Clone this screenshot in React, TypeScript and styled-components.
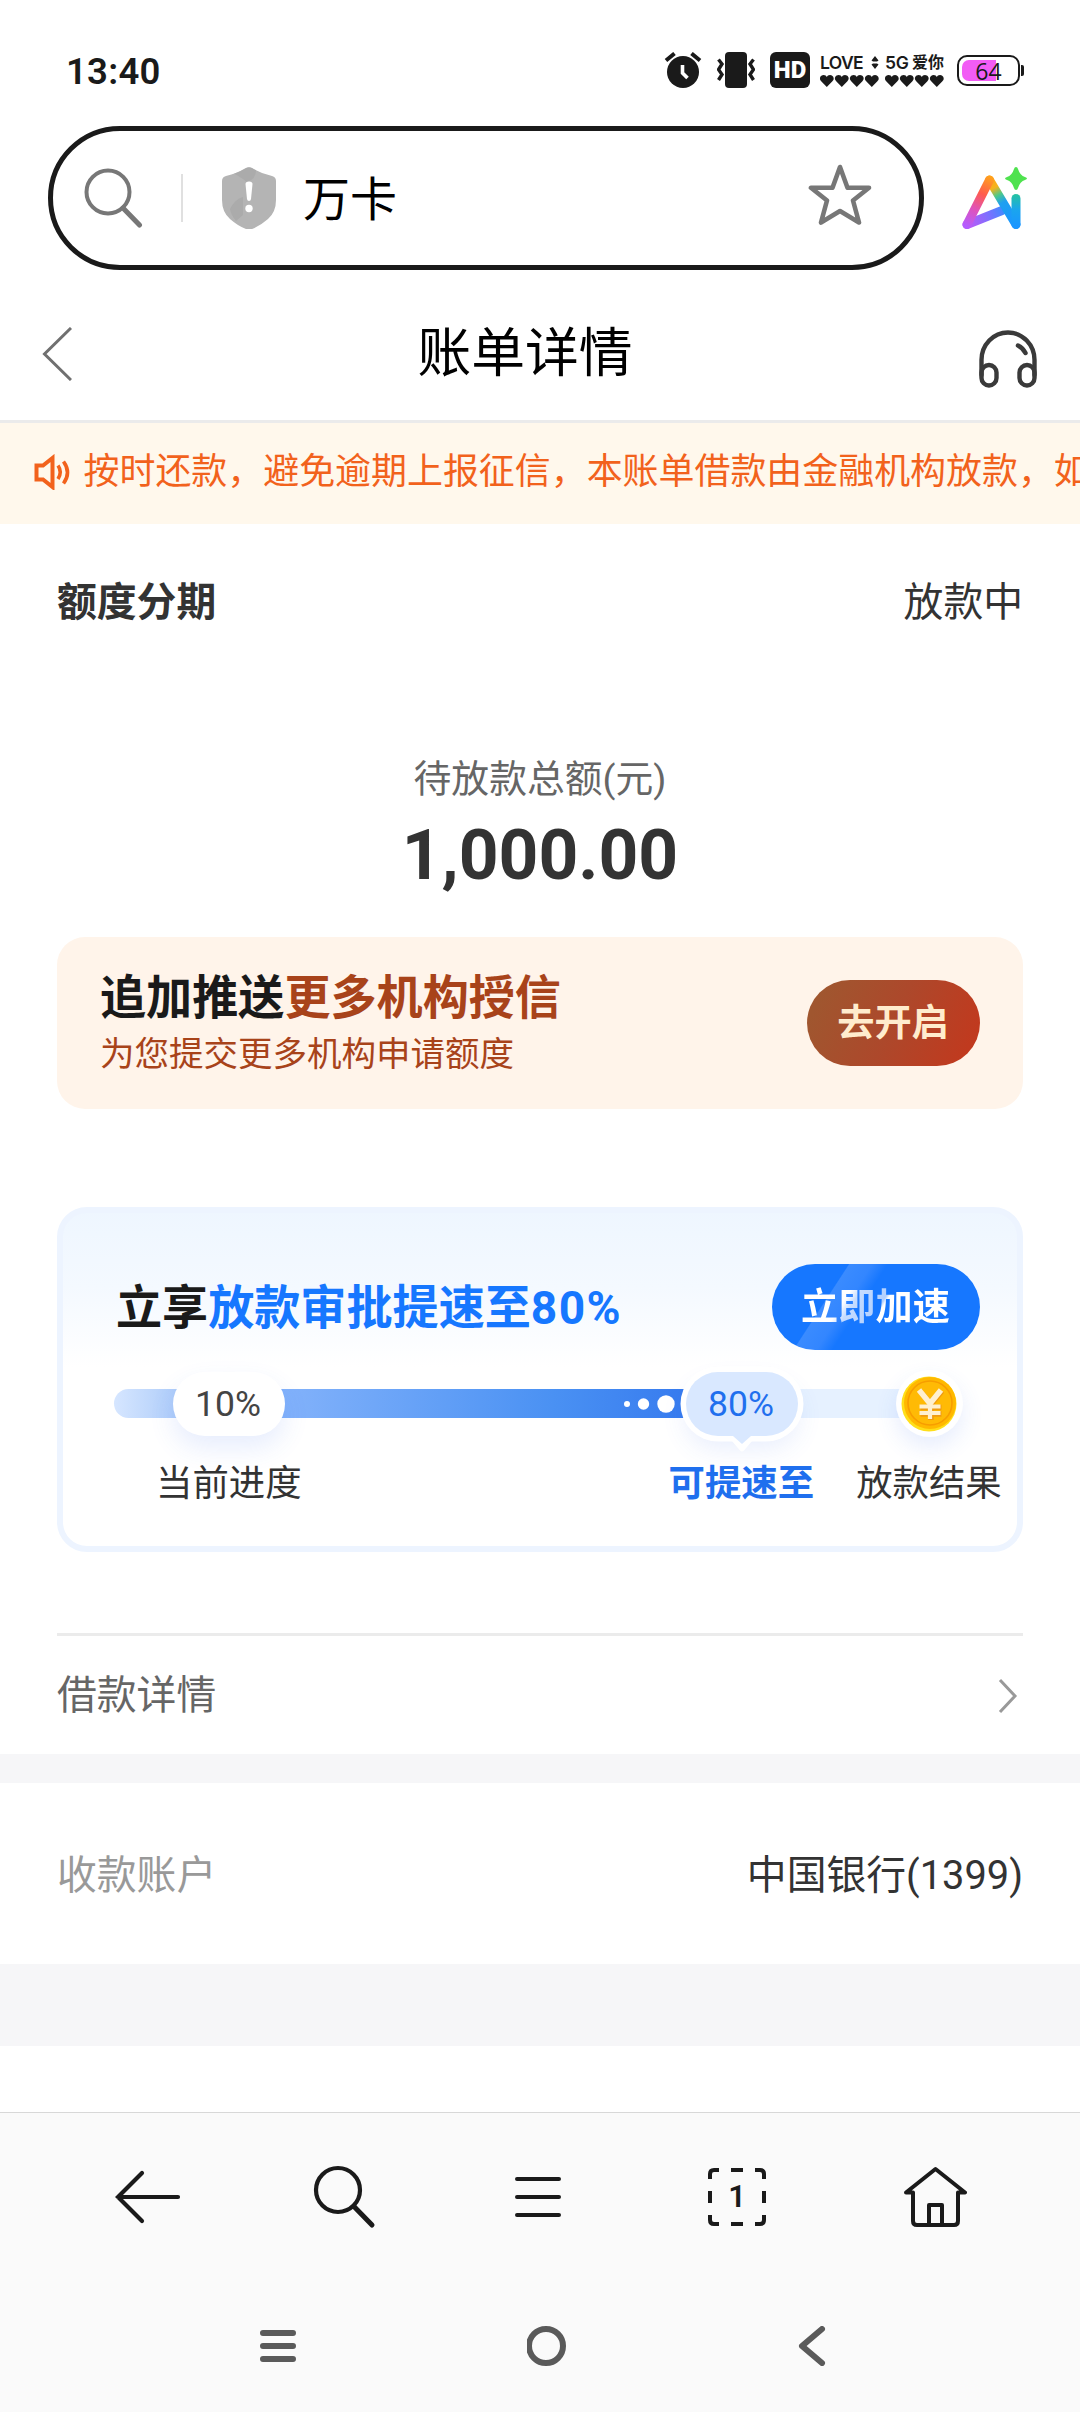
import React from 'react';
import styled, { createGlobalStyle } from 'styled-components';

const GlobalStyle = createGlobalStyle`
  * { box-sizing: border-box; }
  body { margin: 0; background: #fff; }
  svg { display: block; flex: none; }
`;

const Screen = styled.div`
  width: 1080px;
  height: 2412px;
  display: flex;
  flex-direction: column;
  overflow: hidden;
  background: #fff;
  color: #333;
  font-family: Roboto, 'Noto Sans CJK SC', sans-serif;
  white-space: nowrap;
`;

/* ---------- status bar ---------- */
const StatusBar = styled.header`
  height: 126px;
  padding: 14px 56px 0 66px;
  display: flex;
  align-items: flex-start;
  justify-content: space-between;
  color: #1a1a1a;
`;
const Clock = styled.time`
  margin-top: 35px;
  font-size: 36.5px;
  line-height: 46px;
  font-weight: 600;
  letter-spacing: 0.25px;
`;
const StatusIcons = styled.div`
  display: flex;
  align-items: center;
  height: 36px;
  margin-top: 38px;
`;
const Vibrate = styled.div`
  margin-left: 15px;
`;
const HdBadge = styled.div`
  width: 40px;
  height: 36px;
  margin: 0 10px 0 15px;
  border-radius: 6px;
  background: #1a1a1a;
  color: #fff;
  font-size: 24px;
  line-height: 37px;
  font-weight: 900;
  text-align: center;
`;
const Signal = styled.div<{ $gap: number }>`
  width: 59px;
  height: 33px;
  margin-right: ${(p) => p.$gap}px;
  display: flex;
  flex-direction: column;
  justify-content: space-between;
`;
const SignalText = styled.div<{ $spacing: number }>`
  display: flex;
  align-items: center;
  justify-content: space-between;
  height: 17px;
  font-family: Inter, 'Noto Sans CJK SC', sans-serif;
  font-size: 17.5px;
  line-height: 17px;
  font-weight: 600;
  letter-spacing: ${(p) => p.$spacing}px;
`;
const SignalCjk = styled.span`
  font-size: 16px;
  letter-spacing: 0;
`;
const Battery = styled.div`
  width: 63px;
  height: 31px;
  padding: 3px;
  border: 2px solid #1a1a1a;
  border-radius: 10px;
`;
const BatteryFill = styled.div`
  width: 53px;
  height: 21px;
  border-radius: 7px 5px 5px 7px;
  background: linear-gradient(90deg, #f25cf5 0 34px, transparent 34px);
  color: #1a1a1a;
  font-family: 'Open Sans', sans-serif;
  font-size: 23px;
  line-height: 22px;
  text-align: center;
`;
const BatteryTip = styled.div`
  width: 3px;
  height: 11px;
  margin-left: 1px;
  border-radius: 0 2px 2px 0;
  background: #1a1a1a;
`;

/* ---------- address bar ---------- */
const AddressRow = styled.div`
  height: 144px;
  padding: 0 53px 0 48px;
  display: flex;
  align-items: center;
  justify-content: space-between;
`;
const AddressPill = styled.div`
  width: 876px;
  height: 144px;
  border: 5px solid #1a1a1a;
  border-radius: 72px;
  padding: 0 47px 0 31px;
  display: flex;
  align-items: center;
`;
const PillDivider = styled.i`
  width: 2px;
  height: 48px;
  margin: 0 39px 0 37px;
  background: #e0e0e0;
`;
const SiteName = styled.span`
  flex: 1;
  margin-left: 27px;
  padding-top: 4px;
  color: #000;
  font-size: 47px;
  line-height: 60px;
`;
const StarSlot = styled.div`
  padding-bottom: 6px;
`;

/* ---------- page header ---------- */
const PageHeader = styled.div`
  height: 153px;
  border-bottom: 3px solid #ebebeb;
  padding: 17px 43px 0 42px;
  display: grid;
  grid-template-columns: 60px 1fr 60px;
  align-items: center;
`;
const Title = styled.h1`
  margin: 0;
  padding: 1px 29px 0 0;
  font-weight: 400;
  font-size: 53.8px;
  line-height: 60px;
  color: #000;
  text-align: center;
`;
const HeaderAction = styled.div`
  display: flex;
  justify-content: flex-end;
  padding-top: 10px;
`;

const Notice = styled.div`
  height: 101px;
  padding: 0 0 3px 33px;
  display: flex;
  align-items: center;
  gap: 13.5px;
  overflow: hidden;
  background: #fff8ec;
  color: #f2621c;
  font-size: 35.95px;
  line-height: 50px;
`;

/* ---------- bill ---------- */
const Bill = styled.section`
  height: 1230px;
  padding: 0 57px;
  display: flex;
  flex-direction: column;
`;
const Row = styled.div<{ $height: number; $nudge: number; $color?: string }>`
  flex: none;
  height: ${(p) => p.$height}px;
  padding-top: ${(p) => p.$nudge}px;
  display: flex;
  align-items: center;
  justify-content: space-between;
  font-size: 39.8px;
  line-height: 56px;
  color: ${(p) => p.$color ?? '#333'};
`;
const Strong = styled.strong`
  font-weight: 700;
`;
const Muted = styled.span`
  color: #999;
`;
const Total = styled.div`
  height: 257px;
  padding-top: 71px;
  text-align: center;
`;
const TotalLabel = styled.div`
  font-size: 37.8px;
  line-height: 56px;
  color: #666;
`;
const TotalValue = styled.div`
  margin-top: 7px;
  font-size: 69.5px;
  line-height: 84px;
  font-weight: 700;
  color: #333;
`;

const Promo = styled.div`
  flex: none;
  height: 172px;
  padding: 0 43px 0 43px;
  display: flex;
  align-items: center;
  justify-content: space-between;
  border-radius: 28px;
  background: #fff4ea;
  color: #a8431a;
`;
const CardTitle = styled.div<{ $color: string }>`
  padding-top: 1px;
  font-size: 46.1px;
  line-height: 60px;
  font-weight: 700;
  color: #1a1a1a;
  em {
    font-style: normal;
    color: ${(p) => p.$color};
  }
`;
const Percent = styled.span`
  letter-spacing: 1.4px;
`;
const PromoNote = styled.div`
  font-size: 34.5px;
  line-height: 52px;
`;
const PillButton = styled.button<{ $width: number; $bg: string; $color: string }>`
  width: ${(p) => p.$width}px;
  height: 86px;
  padding: 0 1px 0 0;
  border: 0;
  border-radius: 43px;
  background: ${(p) => p.$bg};
  color: ${(p) => p.$color};
  font: 700 37.2px/56px Roboto, 'Noto Sans CJK SC', sans-serif;
`;

const Boost = styled.div`
  flex: none;
  height: 345px;
  margin: 98px 0 81px;
  border: 6px solid #edf4ff;
  border-radius: 30px;
  padding: 0 37px 0 51px;
  background: linear-gradient(180deg, #eef6ff 0, #f4f9ff 80px, #fff 160px);
  background-origin: border-box;
`;
const BoostHead = styled.div`
  height: 86px;
  margin: 51px 0 21px 2px;
  display: flex;
  align-items: center;
  justify-content: space-between;
`;
const SheenText = styled.span`
  background: linear-gradient(123deg, #fff 0 30%, #c5dcff 36%, #b2d0ff 52%, #fff 54%);
  background-clip: text;
  -webkit-background-clip: text;
  color: transparent;
`;
const Steps = styled.div`
  height: 65px;
  display: flex;
  align-items: center;
`;
const TrackPart = styled.div<{ $width: number; $bg: string; $round?: boolean }>`
  flex: none;
  width: ${(p) => p.$width}px;
  height: 29px;
  padding-right: 12px;
  display: flex;
  align-items: center;
  justify-content: flex-end;
  border-radius: ${(p) => (p.$round ? '15px 0 0 15px' : '0')};
  background: ${(p) => p.$bg};
`;
const Bubble = styled.div<{ $active?: boolean }>`
  position: relative;
  z-index: 1;
  flex: none;
  width: 112px;
  height: 64px;
  border-radius: 32px;
  margin: 0 -17px 0 -20px;
  padding-right: 2px;
  font-size: 35.5px;
  line-height: 64px;
  text-align: center;
  color: ${(p) => (p.$active ? '#1f6fee' : '#444')};
  background: ${(p) => (p.$active ? '#d9e8ff' : '#fff')};
  box-shadow: ${(p) => (p.$active ? '0 0 0 5.5px #fff, ' : '')} 0 12px 26px rgba(60, 110, 240, 0.12);
`;
const BubbleTail = styled.svg`
  position: absolute;
  left: 42px;
  top: 61px;
`;
const CoinHolder = styled.div`
  position: relative;
  z-index: 1;
  margin-left: -19px;
  width: 67px;
  height: 67px;
  padding: 5px;
  border-radius: 50%;
  background: #fff;
  box-shadow: 0 10px 22px rgba(60, 110, 240, 0.12);
`;
const StepLabels = styled.div`
  display: flex;
  margin: 22px -20px 0 42px;
  font-size: 36.4px;
  line-height: 52px;
  color: #333;
`;
const StepLabel = styled.span<{ $gap: number; $active?: boolean }>`
  margin-right: ${(p) => p.$gap}px;
  font-weight: ${(p) => (p.$active ? 600 : 400)};
  color: ${(p) => (p.$active ? '#1f6fee' : 'inherit')};
`;
const Rule = styled.hr`
  flex: none;
  width: 100%;
  height: 3px;
  margin: 0;
  border: 0;
  background: #ebebeb;
`;
const Band = styled.div<{ $height: number }>`
  flex: none;
  height: ${(p) => p.$height}px;
  background: #f6f6f8;
`;
const Account = styled.section`
  padding: 0 57px;
`;

/* ---------- bottom bars ---------- */
const Bottom = styled.footer`
  flex: none;
  height: 300px;
  margin-top: auto;
  border-top: 1px solid #d8d8d8;
  background: #fafafa;
`;
const Toolbar = styled.nav`
  height: 168px;
  padding: 0 111px;
  display: grid;
  grid-template-columns: 72px 64px 71px 67px 66px;
  column-gap: 129px;
  justify-content: start;
  align-items: center;
`;
const TabCount = styled.span`
  width: 64px;
  height: 64px;
  display: grid;
  place-items: center;
  color: #1a1a1a;
  font: 600 31px/32px Roboto, sans-serif;
  > * { grid-area: 1 / 1; }
`;
const SystemNav = styled.nav`
  height: 130px;
  padding: 0 252px 0 258px;
  display: flex;
  align-items: center;
  justify-content: space-between;
`;

const ink = '#1a1a1a';

const Hearts = () => (
  <svg width="59" height="12" viewBox="0 0 59 12" fill={ink}>
    {[0, 15, 30, 45].map((x) => (
      <path key={x} transform={`translate(${x} 0)`} d="M6.8 12 1.2 6.3C-1.8 3 1 0 3.6 0 5.2 0 6.3.8 6.8 2 7.3.8 8.4 0 10 0c2.6 0 5.4 3 2.4 6.3z" />
    ))}
  </svg>
);

const AlarmIcon = () => (
  <svg width="38" height="36" viewBox="0 0 38 36">
    <circle cx="19" cy="20" r="16" fill={ink} />
    <path d="M2 8.5 10.5 1.5M27.5 1.5 36 8.5" stroke={ink} strokeWidth="4" fill="none" />
    <path d="M18.5 13v8l5 5" stroke="#fff" strokeWidth="3.6" fill="none" />
  </svg>
);

const VibrateIcon = () => (
  <svg width="38" height="36" viewBox="0 0 38 36">
    <rect x="8" y="0" width="22" height="36" rx="4" fill={ink} />
    <path d="M1.5 7.5 5 12 1.5 17.5 5 22.5 1.5 28M36.5 7.5 33 12l3.5 5.5L33 22.5l3.5 5.5" stroke={ink} strokeWidth="3.4" fill="none" />
  </svg>
);

const ShieldIcon = () => (
  <svg width="54" height="62" viewBox="0 0 54 62">
    <path d="M24 1q3-1.500 6 0 9 5.500 20 8 4 1 4 5v19q0 12-8 19-8 7-16 10-3 1-6 0-8-3-16-10-8-7-8-19V14q0-4 4-5Q15 6.500 24 1z" fill="#b4b4b4" />
    <path d="M24 1q3-1.500 6 0l4 2.200Q34 12 25 15 17 9 12 6.800 18 4.500 24 1zM8 42q5-10 13-12v18l-7 6Q9 48 8 42z" fill="#a6a6a6" opacity=".7" />
    <path d="M23.500 17q0-2.500 3.500-2.500t3.500 2.500L29 32q-.3 2-2 2t-2-2z" fill="#fff" />
    <circle cx="27" cy="41.500" r="3.700" fill="#fff" />
  </svg>
);

const AiLogo = () => (
  <svg width="65" height="64" viewBox="0 0 65 64">
    <defs>
      <linearGradient id="aiLeft" x1="28" y1="10" x2="4" y2="60" gradientUnits="userSpaceOnUse">
        <stop offset="0" stopColor="#ffa31a" />
        <stop offset=".35" stopColor="#ff5c4d" />
        <stop offset=".65" stopColor="#e052b8" />
        <stop offset="1" stopColor="#b45cff" />
      </linearGradient>
      <linearGradient id="aiBase" x1="4" y1="58" x2="42" y2="42" gradientUnits="userSpaceOnUse">
        <stop offset="0" stopColor="#c258f5" />
        <stop offset=".6" stopColor="#7a70ff" />
        <stop offset="1" stopColor="#3c8cff" />
      </linearGradient>
      <linearGradient id="aiRight" x1="28" y1="12" x2="54" y2="58" gradientUnits="userSpaceOnUse">
        <stop offset="0" stopColor="#ffa31a" />
        <stop offset=".2" stopColor="#f5b31c" />
        <stop offset=".36" stopColor="#4cc98a" />
        <stop offset=".52" stopColor="#1fa0f0" />
        <stop offset="1" stopColor="#1a96ff" />
      </linearGradient>
      <linearGradient id="aiStem" x1="54" y1="28" x2="54" y2="60" gradientUnits="userSpaceOnUse">
        <stop offset="0" stopColor="#26c3a0" />
        <stop offset=".5" stopColor="#1aa5ee" />
        <stop offset="1" stopColor="#1a96ff" />
      </linearGradient>
    </defs>
    <g fill="none" strokeWidth="9" strokeLinecap="round" strokeLinejoin="round">
      <path d="M5 58.500 40 44.500" stroke="url(#aiBase)" />
      <path d="M27.500 14 54 58.500" stroke="url(#aiRight)" />
      <path d="M54 32.500v26" stroke="url(#aiStem)" />
      <path d="M5 58.500 27.500 14" stroke="url(#aiLeft)" />
    </g>
    <path d="M54 1q1.500 0 2 2 2 6.500 7 8 2 .8 2 1.500t-2 1.500q-5 1.500-7 8-.5 2-2 2t-2-2q-2-6.500-7-8-2-.8-2-1.500t2-1.500q5-1.500 7-8 .5-2 2-2z" fill="#4fe24f" />
  </svg>
);

const Coin = () => (
  <svg width="57" height="57" viewBox="0 0 57 57">
    <circle cx="28" cy="29" r="27.500" fill="#ffdf1a" />
    <circle cx="29" cy="28" r="26" fill="#ffb800" />
    <circle cx="29" cy="28" r="22" fill="#ffba05" stroke="#f79d00" strokeWidth="1.600" />
    <path d="M18 15 29 28.500 40 15M29 28v16M18.500 31.500h21M18.500 38h21" stroke="#ef9b12" strokeWidth="5.400" fill="none" transform="translate(1 1)" />
    <path d="M18 15 29 28.500 40 15" stroke="#fff0cf" strokeWidth="5.600" fill="none" />
    <path d="M29 28v16M18.500 31.500h21M18.500 38h21" stroke="#fff0cf" strokeWidth="4.200" fill="none" />
  </svg>
);

export default function App() {
  return (
    <Screen>
      <GlobalStyle />
      <StatusBar>
        <Clock>13:40</Clock>
        <StatusIcons>
          <AlarmIcon />
          <Vibrate>
            <VibrateIcon />
          </Vibrate>
          <HdBadge>HD</HdBadge>
          <Signal $gap={6}>
            <SignalText $spacing={-0.6}>
              LOVE
              <svg width="8" height="13" viewBox="0 0 8 13" fill={ink}>
                <path d="M4 0 7.500 4.500 6 5.500H2L.5 4.500zM4 13 .5 8.500 2 7.500h4l1.500 1z" />
              </svg>
            </SignalText>
            <Hearts />
          </Signal>
          <Signal $gap={13}>
            <SignalText $spacing={-0.2}>
              <span>5G</span>
              <SignalCjk>爱你</SignalCjk>
            </SignalText>
            <Hearts />
          </Signal>
          <Battery>
            <BatteryFill>64</BatteryFill>
          </Battery>
          <BatteryTip />
        </StatusIcons>
      </StatusBar>

      <AddressRow>
        <AddressPill>
          <svg width="60" height="60" viewBox="0 0 60 60" fill="none" stroke="#777" strokeLinecap="round">
            <circle cx="24" cy="24" r="21.500" strokeWidth="4" />
            <path d="M39 40 55.500 57" strokeWidth="5" />
          </svg>
          <PillDivider />
          <ShieldIcon />
          <SiteName>万卡</SiteName>
          <StarSlot>
            <svg width="64" height="62" viewBox="0 0 64 62" fill="none" stroke="#777" strokeWidth="4.600" strokeLinejoin="round">
              <path d="M32 3 39.500 23.800H61L45 36.500 51 58.500 32 47 13 58.500 19 36.500 3 23.800H24.500z" />
            </svg>
          </StarSlot>
        </AddressPill>
        <AiLogo />
      </AddressRow>

      <PageHeader>
        <svg width="30" height="54" viewBox="0 0 30 54" fill="none" stroke="#707070" strokeWidth="3">
          <path d="M29 1 2.500 27 29 53" />
        </svg>
        <Title>账单详情</Title>
        <HeaderAction>
          <svg width="58" height="58" viewBox="0 0 58 58" fill="none" stroke="#3a3a3a" strokeWidth="4.400" strokeLinecap="round">
            <path d="M2.500 45V30a26.500 27.500 0 0 1 53 0v15" />
            <rect x="2.500" y="35" width="15" height="20.500" rx="7.500" />
            <rect x="40.500" y="35" width="15" height="20.500" rx="7.500" />
            <path d="M39 15.500q5 2.500 7.500 7.500" strokeWidth="4.500" />
          </svg>
        </HeaderAction>
      </PageHeader>

      <Notice>
        <svg width="37" height="36" viewBox="0 0 37 36" fill="none" stroke="#f2621c" strokeWidth="4">
          <path d="M3.500 11.500h6.500L19.500 4v29L10 25.500H3.500z" />
          <path d="M25 11.500q4.500 6.500 0 13.500M30.500 7.500q8 11 0 22" strokeWidth="3.600" />
        </svg>
        按时还款，避免逾期上报征信，本账单借款由金融机构放款，如
      </Notice>

      <Bill>
        <Row $height={156} $nudge={1}>
          <Strong>额度分期</Strong>
          <span>放款中</span>
        </Row>
        <Total>
          <TotalLabel>待放款总额(元)</TotalLabel>
          <TotalValue>1,000.00</TotalValue>
        </Total>
        <Promo>
          <div>
            <CardTitle $color="#a8431a">
              追加推送<em>更多机构授信</em>
            </CardTitle>
            <PromoNote>为您提交更多机构申请额度</PromoNote>
          </div>
          <PillButton $width={173} $bg="linear-gradient(115deg, #a0562f 10%, #ad482b 50%, #c03a1f 90%)" $color="#ffeccd">
            去开启
          </PillButton>
        </Promo>
        <Boost>
          <BoostHead>
            <CardTitle $color="#1677ff">
              立享
              <em>
                放款审批提速至<Percent>80%</Percent>
              </em>
            </CardTitle>
            <PillButton
              $width={208}
              $bg="linear-gradient(123deg, #1677ff 0 29%, #3a8bff 29.500%, #3386ff 38%, #1677ff 44%)"
              $color="#fff"
            >
              <SheenText>立即加速</SheenText>
            </PillButton>
          </BoostHead>
          <Steps>
            <TrackPart $width={79} $round $bg="linear-gradient(90deg, #d6e6ff, #a4c6f8)" />
            <Bubble>10%</Bubble>
            <TrackPart $width={438} $bg="linear-gradient(90deg, #86b4fb, #4a91f3 65%, #3478ee)">
              <svg width="80" height="20" viewBox="0 0 80 20" fill="#fff">
                <circle cx="13" cy="10" r="3" />
                <circle cx="29.500" cy="10" r="5.700" />
                <circle cx="52" cy="10" r="8.700" />
              </svg>
            </TrackPart>
            <Bubble $active>
              80%
              <BubbleTail width="28" height="22" viewBox="0 0 28 22">
                <path d="M0 8h4l8 9.500q2 2 4 0L24 8h4V3H0z" fill="#fff" />
                <path d="M5 0v3l9 8 9-8V0z" fill="#d9e8ff" />
              </BubbleTail>
            </Bubble>
            <TrackPart $width={134} $bg="#e6f1ff" />
            <CoinHolder>
              <Coin />
            </CoinHolder>
          </Steps>
          <StepLabels>
            <StepLabel $gap={367}>当前进度</StepLabel>
            <StepLabel $gap={42} $active>可提速至</StepLabel>
            <StepLabel $gap={0}>放款结果</StepLabel>
          </StepLabels>
        </Boost>
        <Rule />
        <Row $height={118} $nudge={1} $color="#666">
          <span>借款详情</span>
          <svg width="25" height="36" viewBox="0 0 25 36" fill="none" stroke="#999" strokeWidth="3">
            <path d="M2 2 17 18 2 34" />
          </svg>
        </Row>
      </Bill>
      <Band $height={29} />
      <Account>
        <Row $height={181} $nudge={5}>
          <Muted>收款账户</Muted>
          <span>中国银行(1399)</span>
        </Row>
      </Account>
      <Band $height={82} />

      <Bottom>
        <Toolbar>
          <svg width="72" height="60" viewBox="0 0 72 60" fill="none" stroke={ink} strokeWidth="4.200" strokeLinecap="round">
            <path d="M31 6 7 30l24 24M7 30h60" />
          </svg>
          <svg width="64" height="64" viewBox="0 0 64 64" fill="none" stroke={ink} strokeLinecap="round">
            <circle cx="26" cy="25" r="22" strokeWidth="4.200" />
            <path d="M42 41.500 60 60" strokeWidth="5" />
          </svg>
          <svg width="64" height="44" viewBox="0 0 64 44" fill="none" stroke={ink} strokeWidth="4" strokeLinecap="round">
            <path d="M12 4h42M12 22h42M12 40h42" />
          </svg>
          <TabCount>
            <svg width="58" height="58" viewBox="0 0 58 58" fill="none" stroke={ink} strokeWidth="4">
              <path d="M2 11V6q0-4 4-4h5M23 2h12M47 2h5q4 0 4 4v5M56 23v12M56 47v5q0 4-4 4h-5M35 56H23M11 56H6q-4 0-4-4v-5M2 35V23" />
            </svg>
            <span>1</span>
          </TabCount>
          <svg width="66" height="64" viewBox="0 0 66 64" fill="none" stroke={ink} strokeWidth="4" strokeLinejoin="round" strokeLinecap="round">
            <path d="M12 27.500H5L34.500 4l29.500 23.500H57V56q0 4-4 4H16q-4 0-4-4z" />
            <path d="M28 59V40h13v19" />
          </svg>
        </Toolbar>
        <SystemNav>
          <svg width="40" height="40" viewBox="0 0 40 40" stroke="#5a5a5a" strokeWidth="6" strokeLinecap="round">
            <path d="M5 7h30M5 20h30M5 33h30" />
          </svg>
          <svg width="40" height="40" viewBox="0 0 40 40" fill="none" stroke="#5a5a5a" strokeWidth="6">
            <circle cx="19" cy="20" r="17" />
          </svg>
          <svg width="32" height="40" viewBox="0 0 32 40" fill="none" stroke="#5a5a5a" strokeWidth="6" strokeLinecap="round" strokeLinejoin="round">
            <path d="M26 3 6 20 26 37" />
          </svg>
        </SystemNav>
      </Bottom>
    </Screen>
  );
}
